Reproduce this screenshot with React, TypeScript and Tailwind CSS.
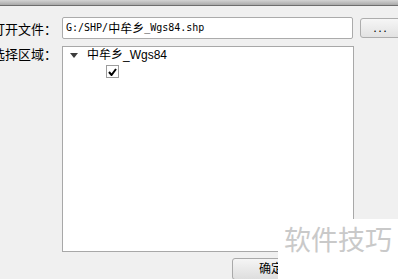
import React from 'react';

const cjk = { fontFamily: '"Noto Sans CJK SC", "Liberation Sans", sans-serif' };

export default function App() {
  return (
    <div
      className="relative w-[398px] h-[279px] overflow-hidden bg-[#f0f0f0] text-black"
      style={cjk}
    >
      {/* 标题栏残边 */}
      <div className="h-[5px] bg-gradient-to-b from-[#d4d4d4] to-[#a9a9a9]" />
      <div className="h-px bg-[#6e6e6e]" />

      {/* 打开文件 */}
      <div className="flex items-center mt-[11px] h-[22px]">
        <div className="w-[57px] shrink-0 flex justify-end">
          <span className="whitespace-nowrap text-[13px] leading-none">打开文件：</span>
        </div>
        <div className="ml-[5px] w-[291px] h-[22px] shrink-0 flex items-center border border-[#ababab] rounded-[2px] bg-white pl-[3px] text-[12px] leading-none whitespace-nowrap">
          <span className="text-[10px]" style={{ fontFamily: '"DejaVu Sans Mono", monospace' }}>G:/SHP/</span>
          <span>中牟乡</span>
          <span className="text-[10px]" style={{ fontFamily: '"DejaVu Sans Mono", monospace' }}>_Wgs84.shp</span>
        </div>
        <button className="ml-[7px] w-[42px] h-[20px] shrink-0 border border-[#adadad] rounded-[3px] bg-gradient-to-b from-[#f6f6f6] to-[#e2e2e2] text-[11px] leading-none pb-[2px] tracking-[2px]">
          ...
        </button>
      </div>

      {/* 选择区域 */}
      <div className="flex mt-[7px]">
        <div className="w-[57px] shrink-0 flex justify-end pt-[1px]">
          <span className="whitespace-nowrap text-[13px] leading-none">选择区域：</span>
        </div>
        <div className="ml-[5px] w-[292px] h-[206px] shrink-0 border border-[#a8a8a8] bg-white">
          <div className="flex items-center h-[14px] mt-[1px]">
            <svg width="8" height="5" viewBox="0 0 8 5" className="ml-[7px]">
              <path d="M0 0 L8 0 L4 5 Z" fill="#3c3c3c" />
            </svg>
            <span
              className="ml-[9px] text-[12px] leading-none"
              style={{ fontFamily: '"Liberation Sans", "Noto Sans CJK SC", sans-serif' }}
            >
              中牟乡_Wgs84
            </span>
          </div>
          <div className="ml-[43px] mt-[3px] w-[13px] h-[13px] border border-[#9c9c9c] bg-white flex items-center justify-center">
            <svg width="9" height="8" viewBox="0 0 9 8">
              <path d="M1 4 L3.5 7 L8 1" stroke="#000" strokeWidth="2" fill="none" />
            </svg>
          </div>
        </div>
      </div>

      {/* 确定 */}
      <div className="flex mt-[6px] pl-[232px]">
        <button className="w-[78px] h-[22px] border border-[#a9a9a9] rounded-[3px] bg-gradient-to-b from-[#f5f5f5] to-[#dedede] text-[12px] leading-none pb-[2px]">
          确定
        </button>
      </div>

      {/* 水印 */}
      <div className="absolute left-[278px] top-[219px] w-[120px] h-[60px] bg-white flex items-start pt-[4px] pl-[6px]">
        <span className="text-[27px] leading-none text-[#c9c9c9] whitespace-nowrap mt-[2px]">软件技巧</span>
      </div>
    </div>
  );
}
